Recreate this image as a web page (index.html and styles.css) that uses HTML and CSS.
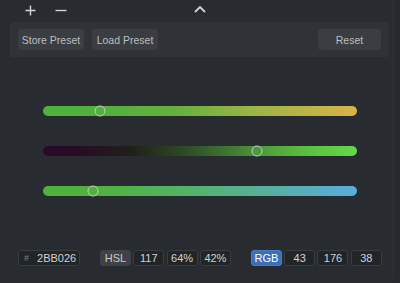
FILE: index.html
```html
<!DOCTYPE html>
<html>
<head>
<meta charset="utf-8">
<link rel="stylesheet" href="styles.css">
</head>
<body>
<div class="app">
  <div class="main">
    <div class="topbar">
      <span class="icon plus"><svg width="11" height="11" viewBox="0 0 11 11"><path d="M5.5 0.5v10M0.5 5.5h10" stroke="#d2d4d6" stroke-width="1.4" fill="none"/></svg></span>
      <span class="icon minus"><svg width="12" height="11" viewBox="0 0 12 11"><path d="M0.5 5.5h11" stroke="#d2d4d6" stroke-width="1.4" fill="none"/></svg></span>
      <span class="icon chevron"><svg width="12" height="8" viewBox="0 0 12 8"><path d="M1 7L6 2l5 5" stroke="#d2d4d6" stroke-width="1.8" fill="none"/></svg></span>
    </div>
    <div class="presets">
      <button class="btn">Store Preset</button>
      <button class="btn">Load Preset</button>
      <button class="btn reset">Reset</button>
    </div>
    <div class="sliders">
      <div class="track t1"><span class="thumb th1"></span></div>
      <div class="track t2"><span class="thumb th2"></span></div>
      <div class="track t3"><span class="thumb th3"></span></div>
    </div>
    <div class="values">
      <div class="field hex"><span class="hash">#</span><span>2BB026</span></div>
      <div class="group">
        <div class="field mode">HSL</div>
        <div class="field">117</div>
        <div class="field">64%</div>
        <div class="field">42%</div>
      </div>
      <div class="group">
        <div class="field mode active">RGB</div>
        <div class="field">43</div>
        <div class="field">176</div>
        <div class="field">38</div>
      </div>
    </div>
  </div>
</div>
</body>
</html>
```

FILE: styles.css
```css
html, body {
  margin: 0;
  padding: 0;
  background: #26292d;
}
body {
  width: 400px;
  height: 283px;
  overflow: hidden;
  font-family: "Liberation Sans", Arial, sans-serif;
}
.app {
  display: flex;
  width: 400px;
  height: 283px;
}
.main {
  width: 394px;
  height: 282px;
  box-sizing: border-box;
  border-right: 1px solid #2e3135;
  border-bottom-right-radius: 6px;
  background: #282b2f;
  display: flex;
  flex-direction: column;
}
.topbar {
  height: 22px;
  display: flex;
  align-items: center;
}
.icon {
  display: flex;
  align-items: center;
  justify-content: center;
}
.plus {
  margin-left: 25px;
  width: 11px;
  margin-top: -2px;
}
.minus {
  margin-left: 19px;
  width: 12px;
  margin-top: -2px;
}
.chevron {
  margin-left: 127px;
  width: 12px;
  margin-top: -4px;
}
.presets {
  margin: 0 4px 0 10px;
  height: 35px;
  box-sizing: border-box;
  padding: 7px 8px;
  background: #2f3236;
  border-radius: 2px;
  display: flex;
  gap: 8px;
}
.btn {
  height: 21px;
  padding: 0;
  border: none;
  border-radius: 3px;
  background: #3a3d41;
  color: #bcbec0;
  font-family: "Liberation Sans", Arial, sans-serif;
  font-size: 10.5px;
  width: 66px;
}
.reset {
  margin-left: auto;
  width: 63px;
}
.sliders {
  margin-top: 49px;
  margin-left: 43px;
  width: 314px;
  display: flex;
  flex-direction: column;
  gap: 30px;
}
.track {
  height: 10px;
  border-radius: 5px;
  position: relative;
}
.t1 {
  background: linear-gradient(to right, #51b13d 0%, #51b13d 18%, #62b03f 40%, #9db445 68%, #dab349 100%);
}
.t2 {
  background: linear-gradient(to right, #2a0a26 0%, #2a0a26 10%, #202018 28%, #2f4a26 45%, #3f7a33 60%, #50a33b 72%, #5bc241 85%, #66d84a 100%);
}
.t3 {
  background: linear-gradient(to right, #51b13d 0%, #51b13d 16%, #55b265 45%, #57b097 68%, #57ade0 100%);
}
.thumb {
  position: absolute;
  top: 50%;
  width: 11px;
  height: 11px;
  box-sizing: border-box;
  border-radius: 50%;
  border: 1.5px solid #c9cbcd;
  transform: translate(-50%, -50%);
}
.th1 { left: 57px; background: #51b13d; }
.th2 { left: 214px; background: #4a9a3a; }
.th3 { left: 50px; background: #51b13d; }
.values {
  margin-top: 54px;
  margin-left: 18px;
  display: flex;
  gap: 20px;
}
.group {
  display: flex;
  gap: 2.3px;
}
.field {
  height: 16px;
  width: 31px;
  box-sizing: border-box;
  border: 1px solid #393c40;
  border-radius: 3px;
  background: #222528;
  color: #d0d2d4;
  font-size: 11px;
  display: flex;
  align-items: center;
  justify-content: center;
}
.hex {
  width: 62px;
  justify-content: flex-start;
  padding-left: 5px;
  gap: 8px;
}
.hash {
  color: #7c7f83;
  font-size: 9px;
}
.mode {
  background: #3e4145;
  border-color: #3e4145;
  color: #c8cacc;
}
.mode.active {
  background: #3d6fb8;
  border-color: #4a7cc4;
  color: #ffffff;
}
```
